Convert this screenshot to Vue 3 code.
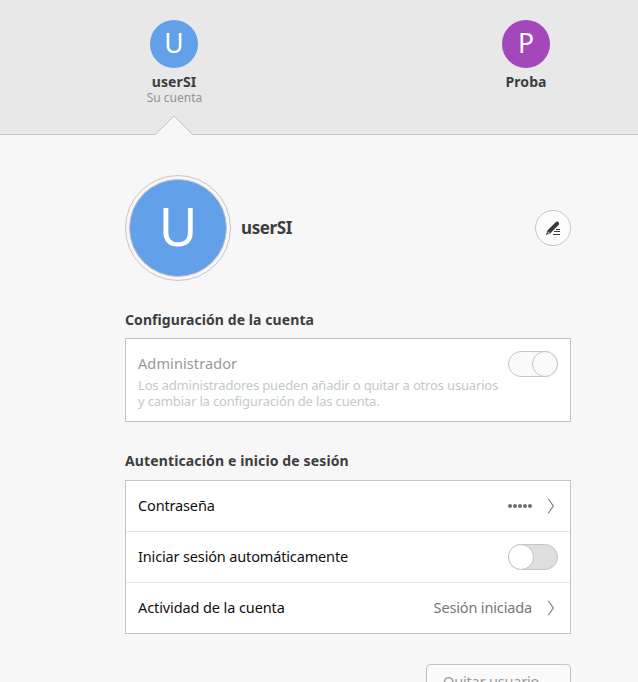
<script setup>
const users = [
  { name: 'userSI', letter: 'U', note: 'Su cuenta', tone: 'blue', active: true },
  { name: 'Proba', letter: 'P', note: '', tone: 'purple', active: false },
]
</script>

<template>
  <div class="window">
    <header class="users">
      <div v-for="u in users" :key="u.name" class="user">
        <span class="avatar" :class="u.tone">{{ u.letter }}</span>
        <span class="user-name">{{ u.name }}</span>
        <span v-if="u.note" class="user-note">{{ u.note }}</span>
        <svg v-if="u.active" class="pointer" width="40" height="20" viewBox="0 0 40 20">
          <path d="M0 20V19.5H1.5L20 1L38.5 19.5H40V20Z" fill="#f7f7f7" />
          <path d="M0 19.5H1.5L20 1L38.5 19.5H40" fill="none" stroke="#c6c6c6" />
        </svg>
      </div>
    </header>

    <main class="content">
      <section class="profile">
        <div class="ring"><span class="portrait">U</span></div>
        <h1>userSI</h1>
        <button class="edit" aria-label="Editar">
          <svg width="16" height="16" viewBox="0 0 16 16">
            <path d="M1 15L2.4 10.6L10.6 2.2Q12 .9 13.5 2.3Q14.9 3.8 13.6 5.1L5.3 13.3Z" fill="#393939" />
            <path d="M2.9 11.2L4.8 13.1L2.6 13.6Z" fill="#c8c8c8" />
            <path d="M11 9.5H15M9 11.5H15M8 14.5H15" stroke="#393939" />
          </svg>
        </button>
      </section>

      <h2 class="title-config">Configuración de la cuenta</h2>
      <div class="card admin">
        <div>
          <div class="label-admin">Administrador</div>
          <div class="help">
            <div>Los administradores pueden añadir o quitar a otros usuarios</div>
            <div>y cambiar la configuración de las cuenta.</div>
          </div>
        </div>
        <span class="switch disabled"><i class="knob"></i></span>
      </div>

      <h2 class="title-auth">Autenticación e inicio de sesión</h2>
      <div class="card">
        <div class="row">
          <span class="label">Contraseña</span>
          <span class="dots"><i v-for="n in 5" :key="n"></i></span>
          <svg class="chevron" width="8" height="16" viewBox="0 0 8 16"><path d="M1.3 .8L6.3 8L1.3 15.2" fill="none" stroke="#777" stroke-width="1.1" /></svg>
        </div>
        <div class="row">
          <span class="label">Iniciar sesión automáticamente</span>
          <span class="switch"><i class="knob"></i></span>
        </div>
        <div class="row">
          <span class="label activity">Actividad de la cuenta</span>
          <span class="value">Sesión iniciada</span>
          <svg class="chevron" width="8" height="16" viewBox="0 0 8 16"><path d="M1.3 .8L6.3 8L1.3 15.2" fill="none" stroke="#777" stroke-width="1.1" /></svg>
        </div>
      </div>

      <button class="remove">Quitar usuario…</button>
    </main>
  </div>
</template>

<style>
body { margin: 0; background: #f7f7f7; }
</style>

<style scoped>
* { box-sizing: border-box; }
.window {
  width: 638px; height: 682px; overflow: hidden; background: #f7f7f7; color: #3d3d3d;
  font-family: "Noto Sans", "Open Sans", sans-serif; font-size: 14.5px; letter-spacing: -0.15px; white-space: nowrap;
}
.users {
  height: 135px; background: #e8e8e8; border-bottom: 1px solid #c6c6c6;
  display: grid; grid-template-columns: 352px 352px;
}
.user { position: relative; display: flex; flex-direction: column; align-items: center; padding-top: 20px; margin-left: -2px; width: 352px; }
.avatar {
  width: 48px; height: 48px; border-radius: 50%; color: #fff; font-size: 26.5px; line-height: 46px;
  text-align: center; letter-spacing: 0;
}
.avatar.blue { background: #62a0ea; }
.avatar.purple { background: #a347ba; }
.user-name { font-size: 14px; font-weight: 700; line-height: 20px; margin-top: 4px; letter-spacing: 0.1px; }
.user-note { font-size: 12px; line-height: 16px; margin-top: -2px; padding-left: 1px; color: #929292; letter-spacing: 0; }
.pointer { position: absolute; left: 156px; top: 115px; }
.content { padding: 40px 67px 0 125px; }
.profile { height: 106px; display: flex; align-items: center; }
.ring { width: 106px; height: 106px; border: 1px solid #c6c6c6; border-radius: 50%; padding: 3px; }
.portrait {
  display: block; width: 98px; height: 98px; border: 1px solid #c6c6c6; border-radius: 50%; background: #62a0ea;
  color: #fff; font-size: 53px; line-height: 92px; text-align: center; letter-spacing: 0;
}
h1 { margin: 0 auto 0 10px; font-size: 17px; font-weight: 700; line-height: 24px; letter-spacing: -0.4px; }
.edit {
  width: 36px; height: 36px; border: 1px solid #c6c6c6; border-radius: 50%; background: #fcfcfc; padding: 0;
  display: flex; align-items: center; justify-content: center;
}
h2 { margin: 28px 0 8px; font-size: 14px; line-height: 21px; font-weight: 700; letter-spacing: 0.08px; }
.card { background: #fff; border: 1px solid #c4c4c4; }
.admin { height: 84px; display: flex; justify-content: space-between; padding: 12px 12px 0; }
.label-admin { line-height: 24px; margin-bottom: 2px; color: #999; letter-spacing: 0.1px; }
.help { font-size: 13px; line-height: 16px; color: #bfcaca; letter-spacing: -0.17px; }
h2.title-auth { margin: 28px 0 9px; letter-spacing: 0.13px; }
.row { height: 51px; padding: 0 12px; display: flex; align-items: center; color: #101010; }
.row:first-child { height: 50px; }
.row + .row { border-top: 1px solid #e4e4e4; }
.label { margin-right: auto; padding-bottom: 2px; }
.activity { letter-spacing: -0.1px; }
.switch { width: 50px; height: 26px; border: 1px solid #c4c4c4; border-radius: 13px; background: #dedede; display: flex; flex: none; }
.knob { width: 26px; height: 26px; margin: -1px; border: 1px solid #c4c4c4; border-radius: 50%; background: #fff; }
.disabled { background: #fafafa; justify-content: flex-end; }
.disabled .knob { background: #fafafa; }
.dots { display: flex; gap: 1px; }
.dots i { width: 4px; height: 4px; border-radius: 50%; background: #707070; }
.chevron { margin: 0 3px 0 15px; }
.value { color: #777; padding-bottom: 2px; }
.remove {
  display: block; width: 145px; height: 35px; margin: 30px 0 0 auto; border: 1px solid #c4c4c4; border-radius: 4px;
  background: #fafafa; color: #999; font: inherit; letter-spacing: -0.18px; line-height: 30px; padding: 0 0 2px 16px; text-align: left;
}
</style>
